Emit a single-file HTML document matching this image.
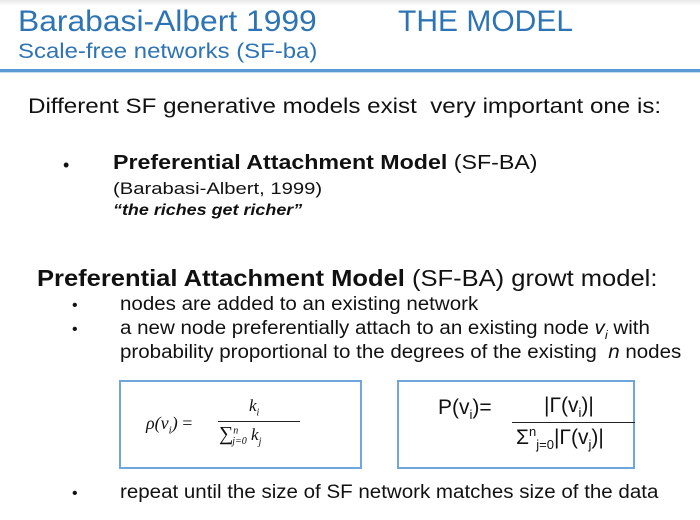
<!DOCTYPE html>
<html><head><meta charset="utf-8"><style>
body{margin:0;width:700px;height:520px;background:#fff;position:relative;overflow:hidden;font-family:"Liberation Sans",sans-serif;color:#111}
.a{position:absolute;white-space:nowrap;transform-origin:0 0}
.top{position:absolute;left:0;top:0;width:700px;height:6px;background:linear-gradient(#e8e8e8,#fff)}
.t{color:#2e74b5}
.box{position:absolute;border:2px solid #6fa6dc;background:#fff}
.serif{font-family:"Liberation Serif",serif;font-style:italic}
.b{font-size:19px;transform:scaleX(1.08)}
</style></head><body>
<div class="top"></div>
<div class="a t" style="left:18px;top:5px;font-size:30px;transform:scaleX(1.06)">Barabasi-Albert 1999</div>
<div class="a t" style="left:398px;top:5px;font-size:30px;">THE MODEL</div>
<div class="a t" style="left:18px;top:40px;font-size:21px;transform:scaleX(1.14)">Scale-free networks (SF-ba)</div>
<div style="position:absolute;left:0;top:69px;width:700px;height:3px;background:#5b9bd5"></div>
<div style="position:absolute;left:0;top:72px;width:700px;height:1px;background:#c9ddf0"></div>

<div class="a" style="left:28px;top:95px;font-size:21px;transform:scaleX(1.15)">Different SF generative models exist &nbsp;very important one is:</div>
<div class="a" style="left:63px;top:155px;font-size:18px;">•</div>
<div class="a" style="left:113px;top:152px;font-size:20px;transform:scaleX(1.16)"><b>Preferential Attachment Model</b> (SF-BA)</div>
<div class="a" style="left:113px;top:179px;font-size:17px;transform:scaleX(1.19)">(Barabasi-Albert, 1999)</div>
<div class="a" style="left:113px;top:202px;font-size:16px;transform:scaleX(1.12)"><b><i>“the riches get richer”</i></b></div>

<div class="a" style="left:37px;top:265px;font-size:23px;transform:scaleX(1.11)"><b>Preferential Attachment Model</b> (SF-BA) growt model:</div>
<div class="a" style="left:72px;top:297px;font-size:16px;">•</div>
<div class="a b" style="left:120px;top:294px;">nodes are added to an existing network</div>
<div class="a" style="left:72px;top:321px;font-size:16px;">•</div>
<div class="a b" style="left:120px;top:318px;">a new node preferentially attach to an existing node <i>v<sub style="font-size:12px">i</sub></i> with</div>
<div class="a b" style="left:120px;top:342px;">probability proportional to the degrees of the existing &nbsp;<i>n</i> nodes</div>

<div class="box" style="left:119px;top:380px;width:239px;height:85px;"></div>
<div class="a serif" style="left:146px;top:413px;font-size:18px;">ρ(v<sub style="font-size:11px">i</sub>) <span style="font-style:normal">=</span></div>
<div class="a serif" style="left:249px;top:396px;font-size:17px;">k<sub style="font-size:10px">i</sub></div>
<div style="position:absolute;left:218px;top:421px;width:82px;height:1px;background:#222"></div>
<div class="a serif" style="left:219px;top:423px;font-size:17px;"><span style="font-style:normal;font-size:20px">∑</span><sup style="font-size:10px">n</sup><sub style="font-size:10px;margin-left:-6px">j=0</sub> k<sub style="font-size:10px">j</sub></div>

<div class="box" style="left:397px;top:380px;width:234px;height:85px;"></div>
<div class="a" style="left:438px;top:396px;font-size:21px;">P(v<sub style="font-size:13px">i</sub>)=</div>
<div class="a" style="left:544px;top:394px;font-size:21px;">|Γ(v<sub style="font-size:13px">i</sub>)|</div>
<div style="position:absolute;left:512px;top:422px;width:123px;height:1px;background:#222"></div>
<div class="a" style="left:516px;top:424px;font-size:21px;">Σ<sup style="font-size:13px">n</sup><sub style="font-size:13px">j=0</sub>|Γ(v<sub style="font-size:13px">j</sub>)|</div>

<div class="a" style="left:72px;top:485px;font-size:16px;">•</div>
<div class="a b" style="left:120px;top:482px;">repeat until the size of SF network matches size of the data</div>
</body></html>
